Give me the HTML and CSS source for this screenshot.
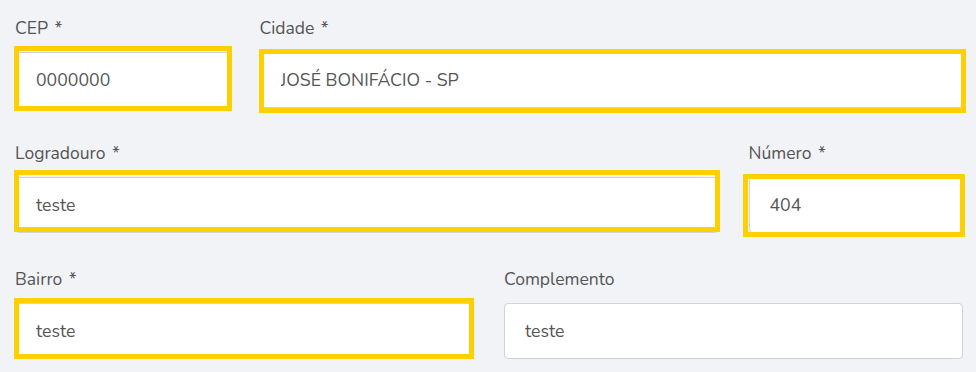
FILE: index.html
```html
<!DOCTYPE html>
<html lang="pt-BR">
<head>
<meta charset="utf-8">
<title>Endereço</title>
<link rel="stylesheet" href="styles.css">
</head>
<body>
<form class="form">
  <div class="row row-1">
    <div class="field span-3">
      <label class="label" for="cep">CEP *</label>
      <div class="control mark mark-cep">
        <input class="input" id="cep" type="text" value="0000000">
      </div>
    </div>
    <div class="field span-9">
      <label class="label" for="cidade">Cidade *</label>
      <div class="control mark mark-cidade">
        <input class="input" id="cidade" type="text" value="JOSÉ BONIFÁCIO - SP">
      </div>
    </div>
  </div>
  <div class="row row-2">
    <div class="field span-9">
      <label class="label" for="logradouro">Logradouro *</label>
      <div class="control mark mark-logradouro">
        <input class="input" id="logradouro" type="text" value="teste">
      </div>
    </div>
    <div class="field span-3">
      <label class="label" for="numero">Número *</label>
      <div class="control mark mark-numero">
        <input class="input" id="numero" type="text" value="404">
      </div>
    </div>
  </div>
  <div class="row row-3">
    <div class="field span-6">
      <label class="label" for="bairro">Bairro *</label>
      <div class="control mark mark-bairro">
        <input class="input" id="bairro" type="text" value="teste">
      </div>
    </div>
    <div class="field span-6">
      <label class="label" for="complemento">Complemento</label>
      <div class="control">
        <input class="input" id="complemento" type="text" value="teste">
      </div>
    </div>
  </div>
</form>
</body>
</html>
```

FILE: styles.css
```css
html, body {
  margin: 0;
  padding: 0;
  background: #f2f3f7;
}

body {
  font-family: "Nunito", "Lato", "Noto Sans", sans-serif;
  color: #555;
}

.form {
  width: 948px;
  padding: 17px 0 0 15px;
  display: flex;
  flex-direction: column;
}

.row {
  display: grid;
  grid-template-columns: repeat(12, 1fr);
  column-gap: 30px;
}

.row-2 { margin-top: 34px; }
.row-3 { margin-top: 35px; }

.span-3 { grid-column: span 3; }
.span-6 { grid-column: span 6; }
.span-9 { grid-column: span 9; }

.field {
  display: flex;
  flex-direction: column;
  min-width: 0;
}

.label {
  font-size: 17.5px;
  line-height: 22px;
  margin-bottom: 13px;
  color: #555;
  word-spacing: 2px;
}

.control {
  position: relative;
}

.input {
  display: block;
  box-sizing: border-box;
  width: 100%;
  height: 56px;
  margin: 0;
  padding: 0 0 0 20px;
  border: 1px solid #d2d3d8;
  border-radius: 4px;
  background: #fff;
  font-family: inherit;
  font-size: 17.7px;
  color: #555;
  outline: none;
}

/* yellow highlight frames drawn over the fields */
.mark::after {
  content: "";
  position: absolute;
  border: 5px solid #ffd000;
  pointer-events: none;
}

.mark-cep::after { top: -6px; left: -1px; right: -2.5px; bottom: -3px; }
.mark-cidade::after { top: -3px; left: -0.5px; right: -2.5px; bottom: -5px; }
.mark-logradouro::after { top: -7px; left: -1px; right: -1.5px; bottom: 1px; }
.mark-numero::after { top: -3px; left: -5.5px; right: -2px; bottom: -4px; }
.mark-bairro::after { top: -5px; left: -1px; right: 0; bottom: 0; }
```
